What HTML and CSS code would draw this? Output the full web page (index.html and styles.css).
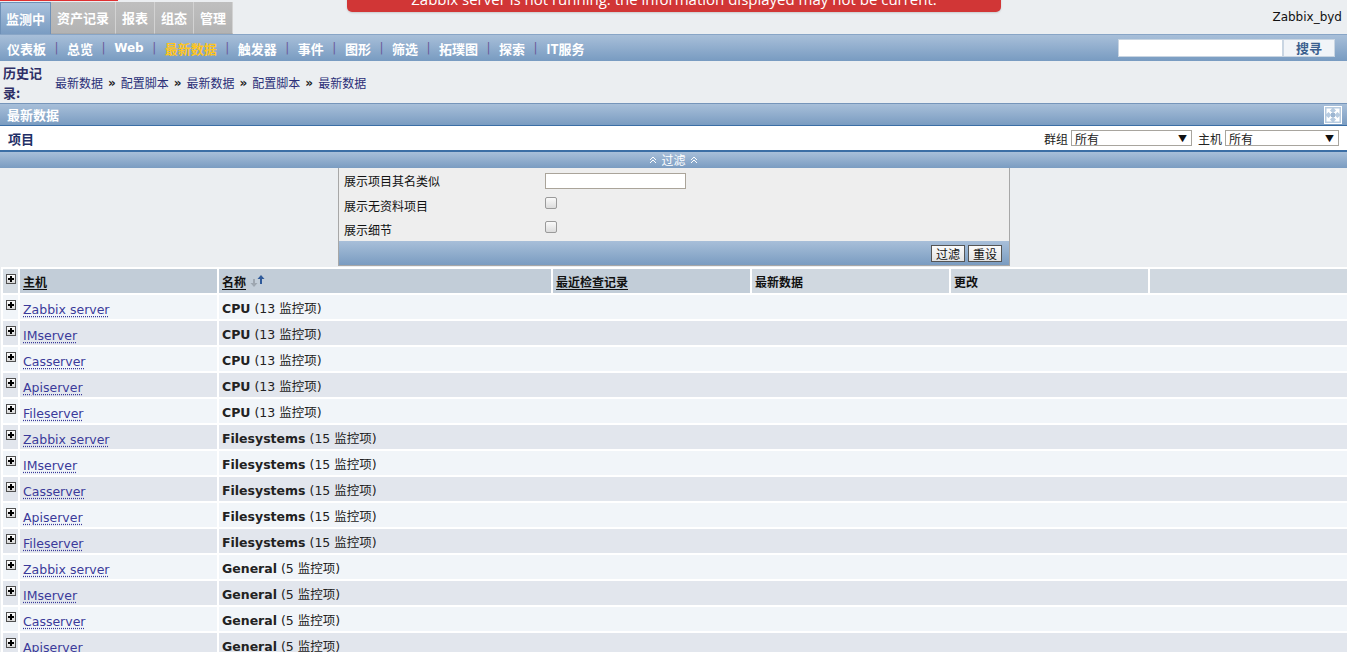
FILE: index.html
```html
<!DOCTYPE html>
<html lang="zh">
<head>
<meta charset="utf-8">
<title>最新数据</title>
<link rel="stylesheet" href="styles.css">
</head>
<body>
<div class="redline"></div>
<div class="banner">Zabbix server is not running: the information displayed may not be current.</div>
<div class="header">
  <div class="tabs">
    <span class="tab active">监测中</span>
    <span class="tab">资产记录</span>
    <span class="tab">报表</span>
    <span class="tab">组态</span>
    <span class="tab">管理</span>
  </div>
  <div class="user">Zabbix_byd</div>
</div>
<div class="subnav">
  <div class="menu">
    <span class="mi">仪表板</span><span class="sep">|</span>
    <span class="mi">总览</span><span class="sep">|</span>
    <span class="mi web">Web</span><span class="sep">|</span>
    <span class="mi cur">最新数据</span><span class="sep">|</span>
    <span class="mi">触发器</span><span class="sep">|</span>
    <span class="mi">事件</span><span class="sep">|</span>
    <span class="mi">图形</span><span class="sep">|</span>
    <span class="mi">筛选</span><span class="sep">|</span>
    <span class="mi">拓璞图</span><span class="sep">|</span>
    <span class="mi">探索</span><span class="sep">|</span>
    <span class="mi">IT服务</span>
  </div>
  <div class="search"><span class="sinput"></span><span class="sbtn">搜寻</span></div>
</div>
<div class="history">
  <div class="hlabel">历史记录:</div>
  <div class="crumbs">
    <a class="crumb">最新数据</a><span class="raquo">»</span>
    <a class="crumb">配置脚本</a><span class="raquo">»</span>
    <a class="crumb">最新数据</a><span class="raquo">»</span>
    <a class="crumb">配置脚本</a><span class="raquo">»</span>
    <a class="crumb">最新数据</a>
  </div>
</div>
<div class="titlebar">
  <span class="ttext">最新数据</span>
  <span class="fsicon"><svg width="18" height="18" viewBox="0 0 18 18"><rect x="0.5" y="0.5" width="17" height="17" fill="#b7cbe0" stroke="#ffffff"/><path d="M4.5 4.5 L13.5 13.5 M13.5 4.5 L4.5 13.5" stroke="#ffffff" stroke-width="2"/><path d="M2.5 2.5 L8 2.5 L2.5 8 Z M15.5 2.5 L15.5 8 L10 2.5 Z M2.5 15.5 L2.5 10 L8 15.5 Z M15.5 15.5 L10 15.5 L15.5 10 Z" fill="#ffffff"/><rect x="7" y="7" width="4" height="4" fill="#9db6d2"/></svg></span>
</div>
<div class="itembar">
  <span class="itemtitle">项目</span>
  <div class="selects">
    <span class="slabel">群组</span><span class="sel"><span>所有</span><span class="arr">▼</span></span>
    <span class="slabel">主机</span><span class="sel sel2"><span>所有</span><span class="arr">▼</span></span>
  </div>
</div>
<div class="filterbar"><svg width="8" height="8" viewBox="0 0 8 8"><path d="M1 4 L4 1 L7 4 M1 7 L4 4 L7 7" fill="none" stroke="#fff" stroke-width="1"/></svg><span class="ftext">过滤</span><svg width="8" height="8" viewBox="0 0 8 8"><path d="M1 4 L4 1 L7 4 M1 7 L4 4 L7 7" fill="none" stroke="#fff" stroke-width="1"/></svg></div>
<div class="filterwrap">
  <div class="filter">
    <div class="frow"><span class="flabel">展示项目其名类似</span><span class="finput"></span></div>
    <div class="frow"><span class="flabel">展示无资料项目</span><span class="fcheck"></span></div>
    <div class="frow"><span class="flabel">展示细节</span><span class="fcheck"></span></div>
    <div class="ffoot"><span class="fbtn">过滤</span><span class="fbtn">重设</span></div>
  </div>
</div>
<table class="grid">
  <colgroup>
    <col class="c0"><col class="c1"><col class="c2"><col class="c3"><col class="c4"><col class="c5"><col class="c6">
  </colgroup>
  <thead>
    <tr>
      <th class="h0"><span class="plus"></span></th>
      <th class="dk"><u>主机</u></th>
      <th class="dk"><u>名称</u><svg class="sorticon" width="16" height="14" viewBox="0 0 16 14"><path d="M4 5 L4 10" stroke="#9ea7b1" stroke-width="2"/><path d="M0.5 9 L4 13 L7.5 9 Z" fill="#9ea7b1"/><path d="M11 10 L11 4" stroke="#2f5a9a" stroke-width="2"/><path d="M7.5 5 L11 1 L14.5 5 Z" fill="#2f5a9a"/></svg></th>
      <th class="dk"><u>最近检查记录</u></th>
      <th class="hl">最新数据</th>
      <th class="hl">更改</th>
      <th class="hl"></th>
    </tr>
  </thead>
  <tbody>
    <tr class="odd"><td><span class="plus"></span></td><td><a class="host">Zabbix server</a></td><td colspan="5"><b>CPU</b> (13 监控项)</td></tr>
    <tr class="even"><td><span class="plus"></span></td><td><a class="host">IMserver</a></td><td colspan="5"><b>CPU</b> (13 监控项)</td></tr>
    <tr class="odd"><td><span class="plus"></span></td><td><a class="host">Casserver</a></td><td colspan="5"><b>CPU</b> (13 监控项)</td></tr>
    <tr class="even"><td><span class="plus"></span></td><td><a class="host">Apiserver</a></td><td colspan="5"><b>CPU</b> (13 监控项)</td></tr>
    <tr class="odd"><td><span class="plus"></span></td><td><a class="host">Fileserver</a></td><td colspan="5"><b>CPU</b> (13 监控项)</td></tr>
    <tr class="even"><td><span class="plus"></span></td><td><a class="host">Zabbix server</a></td><td colspan="5"><b>Filesystems</b> (15 监控项)</td></tr>
    <tr class="odd"><td><span class="plus"></span></td><td><a class="host">IMserver</a></td><td colspan="5"><b>Filesystems</b> (15 监控项)</td></tr>
    <tr class="even"><td><span class="plus"></span></td><td><a class="host">Casserver</a></td><td colspan="5"><b>Filesystems</b> (15 监控项)</td></tr>
    <tr class="odd"><td><span class="plus"></span></td><td><a class="host">Apiserver</a></td><td colspan="5"><b>Filesystems</b> (15 监控项)</td></tr>
    <tr class="even"><td><span class="plus"></span></td><td><a class="host">Fileserver</a></td><td colspan="5"><b>Filesystems</b> (15 监控项)</td></tr>
    <tr class="odd"><td><span class="plus"></span></td><td><a class="host">Zabbix server</a></td><td colspan="5"><b>General</b> (5 监控项)</td></tr>
    <tr class="even"><td><span class="plus"></span></td><td><a class="host">IMserver</a></td><td colspan="5"><b>General</b> (5 监控项)</td></tr>
    <tr class="odd"><td><span class="plus"></span></td><td><a class="host">Casserver</a></td><td colspan="5"><b>General</b> (5 监控项)</td></tr>
    <tr class="even"><td><span class="plus"></span></td><td><a class="host">Apiserver</a></td><td colspan="5"><b>General</b> (5 监控项)</td></tr>
  </tbody>
</table>
</body>
</html>
```
FILE: styles.css
```css
html, body {
  margin: 0;
  padding: 0;
}
body {
  background: #ebeef1;
  font-family: "DejaVu Sans", "Noto Sans CJK SC", sans-serif;
  font-size: 12px;
  color: #222;
  position: relative;
  overflow: hidden;
  height: 652px;
}
.redline {
  position: absolute;
  left: 0;
  top: 0;
  width: 118px;
  height: 1px;
  background: #e03030;
}
.banner {
  position: absolute;
  left: 347px;
  top: -11px;
  width: 654px;
  height: 23px;
  background: #d13636;
  border-radius: 0 0 5px 5px;
  color: #fff;
  font-family: "Open Sans", "DejaVu Sans", sans-serif;
  font-size: 15px;
  line-height: 20px;
  text-align: center;
  box-shadow: 0 1px 2px rgba(0,0,0,0.15);
}
.header {
  display: flex;
  justify-content: space-between;
  align-items: flex-end;
  height: 34px;
}
.tabs {
  display: flex;
  height: 32px;
}
.tab {
  display: block;
  padding: 0 6px;
  line-height: 31px;
  font-family: "Noto Sans CJK SC", sans-serif;
  font-weight: bold;
  font-size: 13px;
  color: #fff;
  background: linear-gradient(#bfbfbf, #b3b3b3);
  border-right: 1px solid #d2d2d2;
  border-bottom: 1px solid #a9a9a9;
}
.tab.active {
  background: linear-gradient(#a9c1dc, #7a9cc2);
  border: 1px solid #6e90b7;
  border-bottom: none;
  padding: 0 5px;
}
.user {
  font-size: 12px;
  color: #111;
  padding: 0 5px 10px 0;
}
.subnav {
  display: flex;
  justify-content: space-between;
  align-items: center;
  height: 26px;
  border-top: 1px solid #88a5c6;
  background: linear-gradient(#a8bfd9, #789bc1);
}
.menu {
  display: flex;
  align-items: center;
  padding-left: 7px;
}
.mi {
  font-family: "Noto Sans CJK SC", sans-serif;
  font-weight: bold;
  font-size: 13px;
  color: #fff;
}
.mi.web {
  font-family: "DejaVu Sans", sans-serif;
  font-size: 12px;
}
.mi.cur {
  color: #ffc520;
}
.sep {
  color: #6b5b9a;
  font-size: 12px;
  padding: 0 8.5px;
}
.search {
  display: flex;
  padding-right: 12px;
}
.sinput {
  width: 163px;
  height: 16px;
  background: #fff;
  border: 1px solid #c9d5e2;
}
.sbtn {
  width: 50px;
  height: 16px;
  line-height: 16px;
  text-align: center;
  background: #f1f4f8;
  border: 1px solid #c9d5e2;
  color: #3b5f8e;
  font-family: "Noto Sans CJK SC", sans-serif;
  font-weight: bold;
  font-size: 13px;
}
.history {
  display: flex;
  align-items: center;
  height: 42px;
}
.hlabel {
  width: 47px;
  padding-left: 3px;
  padding-top: 2px;
  font-family: "Noto Sans CJK SC", sans-serif;
  font-weight: bold;
  font-size: 13px;
  line-height: 20px;
  color: #2e2e66;
}
.crumbs {
  display: flex;
  align-items: center;
  padding-left: 5px;
  padding-top: 1px;
}
.crumb {
  font-family: "Noto Sans CJK SC", sans-serif;
  font-size: 12px;
  color: #2a2f78;
}
.raquo {
  color: #222;
  font-weight: bold;
  font-size: 12px;
  padding: 0 5px;
}
.titlebar {
  display: flex;
  justify-content: space-between;
  align-items: center;
  height: 21px;
  border-top: 1px solid #7695ba;
  background: linear-gradient(#a8bfd9, #7a9cc1);
}
.ttext {
  padding-left: 7px;
  font-family: "Noto Sans CJK SC", sans-serif;
  font-weight: bold;
  font-size: 13px;
  color: #fff;
}
.fsicon {
  display: flex;
  padding-right: 5px;
}
.itembar {
  display: flex;
  justify-content: space-between;
  align-items: center;
  height: 24px;
  background: #fff;
  border-top: 1px solid #3b6ea5;
  border-bottom: 1px solid #3b6ea5;
}
.itemtitle {
  padding-left: 8px;
  font-family: "Noto Sans CJK SC", sans-serif;
  font-weight: bold;
  font-size: 13px;
  color: #1f2f66;
}
.selects {
  display: flex;
  align-items: center;
  padding-right: 8px;
}
.slabel {
  font-family: "Noto Sans CJK SC", sans-serif;
  font-size: 12px;
  color: #222;
  padding: 0 3px 0 6px;
}
.sel {
  display: flex;
  justify-content: space-between;
  align-items: center;
  width: 116px;
  height: 14px;
  border: 1px solid #a8a59e;
  background: #fff;
  font-family: "Noto Sans CJK SC", sans-serif;
  font-size: 12px;
  padding: 0 0 0 3px;
  box-sizing: content-box;
}
.sel2 {
  width: 109px;
}
.arr {
  font-size: 9px;
  padding-right: 4px;
  color: #111;
}
.filterbar {
  display: flex;
  justify-content: center;
  align-items: center;
  gap: 4px;
  height: 17px;
  background: linear-gradient(#a8bfd9, #7a9cc1);
  border-top: 1px solid #3b6ea5;
  box-sizing: border-box;
}
.ftext {
  font-family: "Noto Sans CJK SC", sans-serif;
  font-size: 12px;
  color: #fff;
  line-height: 14px;
}
.filterwrap {
  display: flex;
  justify-content: center;
  padding-left: 1px;
}
.filter {
  width: 670px;
  background: #eeeeee;
  border: 1px solid #a7a7a7;
  border-top: none;
}
.frow {
  display: flex;
  align-items: center;
  height: 24px;
}
.frow:first-child {
  height: 25px;
}
.flabel {
  width: 201px;
  padding-left: 5px;
  font-family: "Noto Sans CJK SC", sans-serif;
  font-size: 12px;
  color: #111;
}
.finput {
  width: 139px;
  height: 14px;
  background: #fff;
  border: 1px solid #aaa49a;
}
.fcheck {
  width: 10px;
  height: 10px;
  margin-top: -5px;
  border: 1px solid #9a9a9a;
  border-radius: 2px;
  background: linear-gradient(#fafafa, #dcdcdc);
}
.ffoot {
  display: flex;
  justify-content: flex-end;
  align-items: center;
  gap: 3px;
  height: 24px;
  padding-right: 7px;
  background: linear-gradient(#a8bfd9, #7a9cc1);
}
.fbtn {
  height: 15px;
  line-height: 15px;
  padding: 0 4px;
  border: 1px solid #555;
  background: linear-gradient(#fbfbfb, #e3e3e3);
  font-family: "Noto Sans CJK SC", sans-serif;
  font-size: 12px;
  color: #111;
}
.grid {
  margin-top: 1px;
  margin-left: 1px;
  width: 1346px;
  border-collapse: separate;
  border-spacing: 2px;
  background: #fff;
  table-layout: fixed;
}
.grid th, .grid td {
  padding: 0 3px;
  height: 24px;
  text-align: left;
  vertical-align: middle;
}
.grid th {
  font-family: "Noto Sans CJK SC", sans-serif;
  font-size: 12px;
  font-weight: bold;
  color: #111;
}
.grid th u {
  text-decoration-thickness: 1px;
  text-underline-offset: 2px;
}
.grid th.dk { background: #c2cdd8; }
.grid th.hl { background: #d0d8e0; }
.grid th.h0 { background: #d6dde4; }
.c0 { width: 15px; }
.c1 { width: 197px; }
.c2 { width: 332px; }
.c3, .c4, .c5, .c6 { width: 197px; }
.grid td:first-child, .grid th:first-child {
  padding: 0 3px;
  vertical-align: top;
}
.sorticon {
  vertical-align: -1px;
  margin-left: 4px;
}
.plus {
  display: block;
  width: 8px;
  height: 8px;
  margin-top: 5px;
  border: 1px solid #505050;
  background: linear-gradient(#ffffff, #d8d8d8);
  position: relative;
}
.plus::before {
  content: "";
  position: absolute;
  left: 1px;
  top: 3px;
  width: 6px;
  height: 2px;
  background: #000;
}
.plus::after {
  content: "";
  position: absolute;
  left: 3px;
  top: 1px;
  width: 2px;
  height: 6px;
  background: #000;
}
tr.odd td { background: #f1f5f9; }
tr.even td { background: #e2e6ed; }
.host {
  display: inline-block;
  padding-top: 5px;
  color: #3a3a9a;
  font-size: 12.5px;
  text-decoration: underline dotted;
  text-underline-offset: 2px;
}
.grid td b {
  font-weight: bold;
  color: #222;
}
.grid td {
  font-size: 12.5px;
  color: #222;
}
```
